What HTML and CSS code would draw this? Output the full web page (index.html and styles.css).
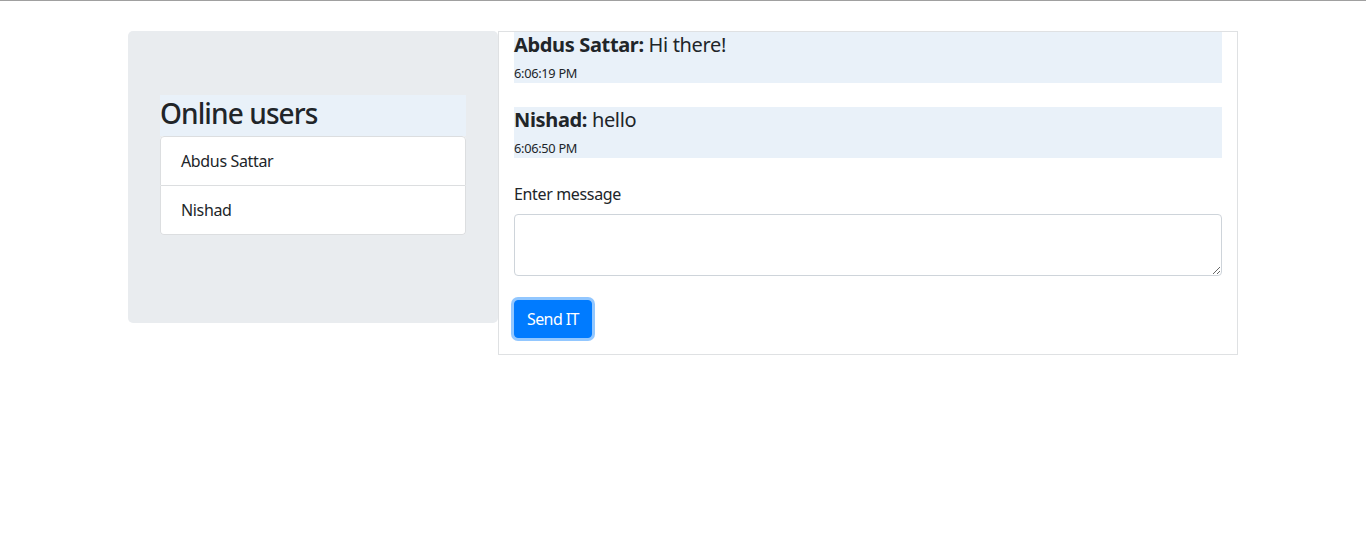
FILE: index.html
```html
<!DOCTYPE html>
<html lang="en">
<head>
<meta charset="utf-8">
<title>Chat</title>
<link rel="stylesheet" href="styles.css">
</head>
<body class="page">
  <div class="container">
    <div class="row">
      <aside class="jumbotron">
        <div class="users-title">Online users</div>
        <ul class="list-group">
          <li class="list-item">Abdus Sattar</li>
          <li class="list-item">Nishad</li>
        </ul>
      </aside>
      <section class="chat">
        <div class="msg">
          <div class="msg-text"><strong class="msg-name">Abdus Sattar:</strong> Hi there!</div>
          <div class="msg-time">6:06:19 PM</div>
        </div>
        <div class="msg">
          <div class="msg-text"><strong class="msg-name">Nishad:</strong> hello</div>
          <div class="msg-time">6:06:50 PM</div>
        </div>
        <form class="send-form">
          <label class="form-label" for="message">Enter message</label>
          <textarea class="form-control" id="message" rows="2"></textarea>
          <button class="btn" type="button">Send IT</button>
        </form>
      </section>
    </div>
  </div>
</body>
</html>
```

FILE: styles.css
```css
.page {
  margin: 0;
  border-top: 1px solid #a0a0a0;
  background: #fff;
  color: #212529;
  font-family: "Noto Sans", "Open Sans", sans-serif;
  font-size: 16px;
  line-height: 24px;
}

.container {
  width: 1110px;
  margin: 0 auto;
  padding-top: 30px;
}

.row {
  display: flex;
  align-items: flex-start;
}

.jumbotron {
  width: 370px;
  box-sizing: border-box;
  padding: 64px 32px 88px;
  background: #e9ecef;
  border-radius: 5px;
}

.users-title {
  background: #e9f1f9;
  font-size: 28px;
  line-height: 34px;
  padding: 1px 0 6px;
  font-weight: 500;
  letter-spacing: -0.9px;
}

.list-group {
  list-style: none;
  margin: 0;
  padding: 0;
  background: #fff;
  border-radius: 4px;
}

.list-item {
  padding: 12px 20px;
  border: 1px solid #dcdee0;
  letter-spacing: -0.35px;
}

.list-item:first-child {
  border-radius: 4px 4px 0 0;
}

.list-item + .list-item {
  border-top: 0;
  border-radius: 0 0 4px 4px;
}

.chat {
  width: 740px;
  box-sizing: border-box;
  border: 1px solid #dfe1e3;
  padding: 0 15px 16px;
}

.msg {
  background: #e9f1f9;
  margin-bottom: 24px;
}

.msg-text {
  font-size: 20px;
  line-height: 24px;
  padding-top: 1px;
  margin-bottom: 7px;
  letter-spacing: -0.35px;
}

.msg-name {
  font-weight: 700;
}

.msg-time {
  font-size: 12.8px;
  line-height: 19px;
  letter-spacing: -0.3px;
}

.send-form {
  display: flex;
  flex-direction: column;
  align-items: flex-start;
}

.form-label {
  margin-bottom: 8px;
  letter-spacing: -0.35px;
}

.form-control {
  width: 100%;
  height: 62px;
  box-sizing: border-box;
  padding: 6px 12px;
  border: 1px solid #ced4da;
  border-radius: 4px;
  font: inherit;
  margin: 0 0 24px;
}

.btn {
  height: 38px;
  padding: 6px 12px;
  border: 1px solid #007bff;
  border-radius: 4px;
  background: #007bff;
  color: #fff;
  font: inherit;
  letter-spacing: -0.6px;
  box-shadow: 0 0 0 3px rgba(38, 143, 255, 0.5);
}
```
